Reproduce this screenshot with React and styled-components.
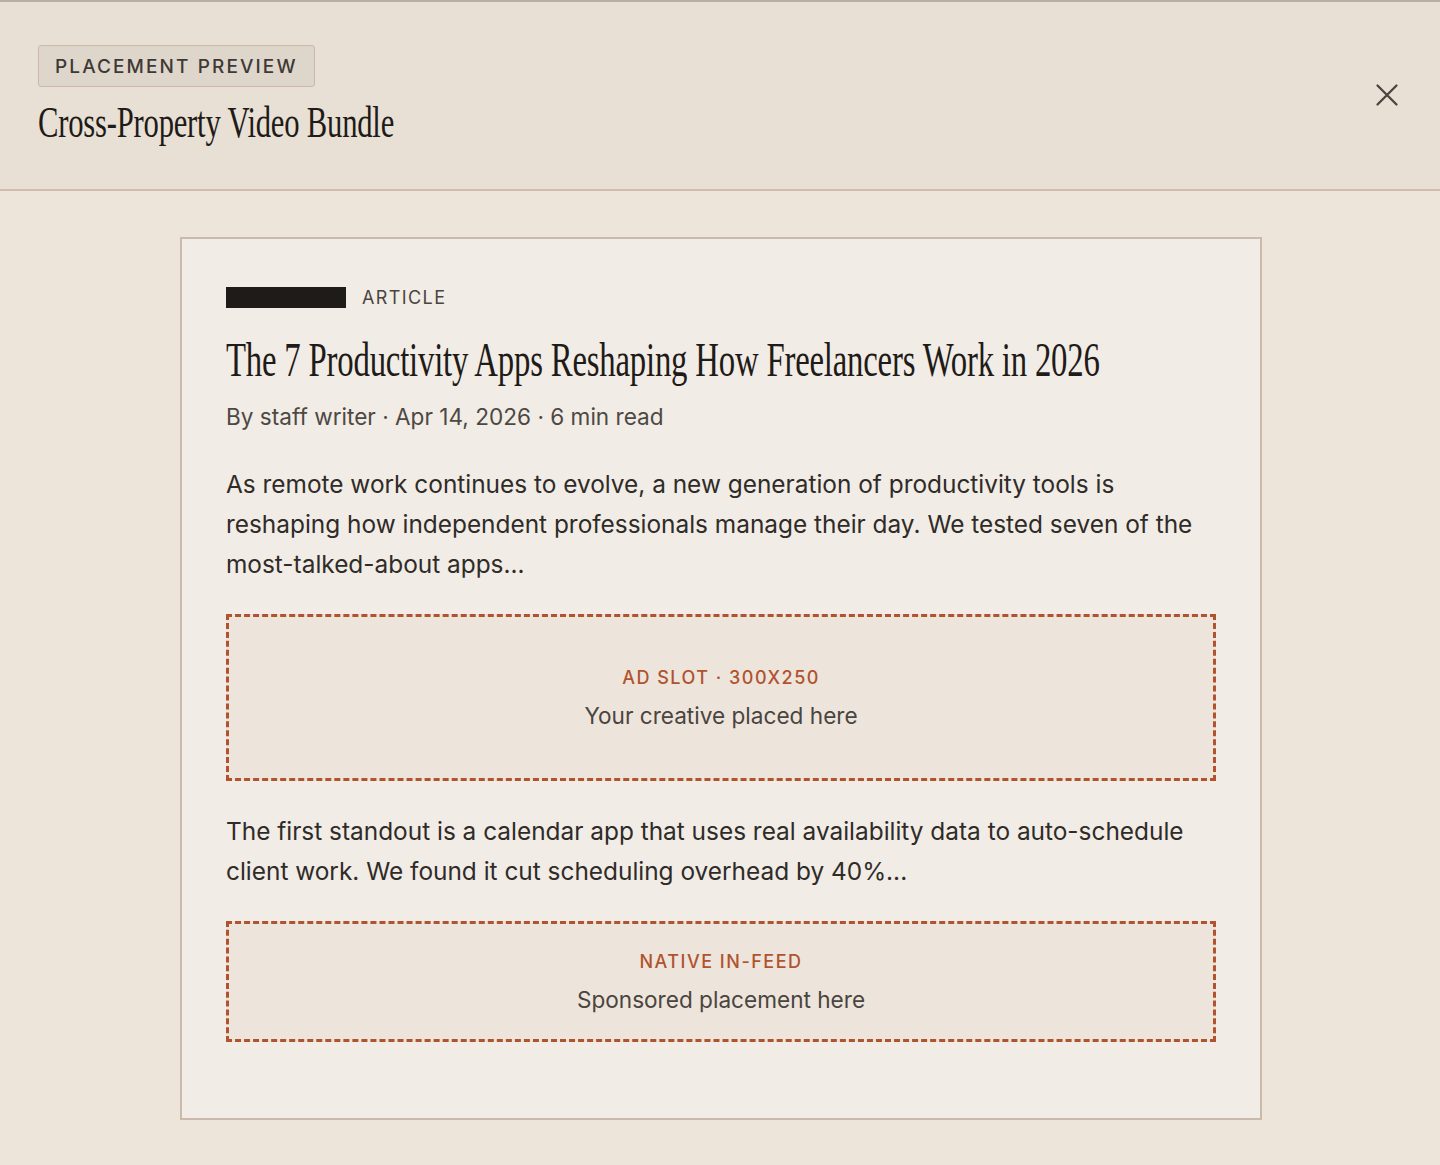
import React from "react";
import styled, { createGlobalStyle } from "styled-components";

const GlobalStyle = createGlobalStyle`
  html, body {
    margin: 0;
    padding: 0;
    background: #ede5da;
  }
  body {
    font-family: Inter, "Noto Sans", sans-serif;
    color: #2f2b28;
  }
`;

const Page = styled.div`
  min-height: 1165px;
  border-top: 2px solid #b8aea4;
  box-sizing: border-box;
  background: #ede5da;
`;

const Header = styled.header`
  display: flex;
  justify-content: space-between;
  align-items: flex-start;
  padding: 43px 38px 0 38px;
  height: 189px;
  box-sizing: border-box;
  background: #e8e0d4;
  border-bottom: 2px solid #cfbcad;
`;

const HeaderText = styled.div`
  display: flex;
  flex-direction: column;
  align-items: flex-start;
`;

const Badge = styled.span`
  display: inline-block;
  padding: 9px 16px 8px;
  font-size: 19px;
  font-weight: 500;
  letter-spacing: 2.1px;
  color: #3e3935;
  background: #ded6cb;
  border: 1.5px solid #cdb7a6;
  border-radius: 3px;
  line-height: 23px;
`;

const SerifLine = styled.h1`
  margin: 0;
  font-family: "Liberation Serif", "DejaVu Serif", serif;
  font-weight: 400;
  font-size: ${(p) => p.$size}px;
  line-height: ${(p) => p.$line}px;
  color: #1f1b18;
  white-space: nowrap;
  transform: scaleX(${(p) => p.$squeeze});
  transform-origin: left center;
  letter-spacing: -0.3px;
`;

const HeaderTitle = styled(SerifLine)`
  margin-top: 12px;
`;

const CloseButton = styled.button`
  margin-top: 36px;
  margin-right: 1px;
  width: 28px;
  height: 28px;
  padding: 0;
  border: none;
  background: transparent;
  color: #4a4440;
  cursor: pointer;
  display: flex;
  align-items: center;
  justify-content: center;
`;

const Body = styled.main`
  display: flex;
  justify-content: center;
  padding: 46px 0 45px 2px;
`;

const Card = styled.article`
  width: 1082px;
  box-sizing: border-box;
  background: #f1ece5;
  border: 2px solid #cbb9ab;
  padding: 48px 44px 76px 44px;
  display: flex;
  flex-direction: column;
`;

const Kicker = styled.div`
  display: flex;
  align-items: center;
  gap: 16px;
`;

const RedactedBar = styled.span`
  width: 120px;
  height: 21px;
  background: #1f1b18;
`;

const KickerLabel = styled.span`
  font-size: 18px;
  letter-spacing: 1.4px;
  color: #4a4440;
`;

const ArticleTitle = styled(SerifLine)`
  margin-top: 26px;
`;

const Meta = styled.div`
  margin-top: 16px;
  font-size: 22.6px;
  color: #4d4843;
  line-height: 30px;
`;

const Paragraph = styled.p`
  margin: ${(p) => p.$top}px 0 0;
  font-size: 24.4px;
  line-height: 40px;
  color: #2f2b28;
`;

const AdSlot = styled.div`
  margin-top: 30px;
  height: ${(p) => p.$height}px;
  box-sizing: border-box;
  border: 3px dashed #b0532e;
  background: #ede5db;
  display: flex;
  flex-direction: column;
  align-items: center;
  justify-content: center;
  gap: 13px;
`;

const SlotLabel = styled.span`
  font-size: 18px;
  font-weight: 500;
  letter-spacing: 1.5px;
  color: #b0532e;
  line-height: 24px;
`;

const SlotText = styled.span`
  font-size: 22.6px;
  color: #4a4440;
  line-height: 26px;
`;

export default function App() {
  return (
    <>
      <GlobalStyle />
      <Page>
        <Header>
          <HeaderText>
            <Badge>PLACEMENT PREVIEW</Badge>
            <HeaderTitle $size={44} $line={48} $squeeze={0.696}>
              Cross-Property Video Bundle
            </HeaderTitle>
          </HeaderText>
          <CloseButton aria-label="Close">
            <svg width="24" height="24" viewBox="0 0 24 24" fill="none" stroke="currentColor" strokeWidth="2.3" strokeLinecap="round">
              <path d="M2.5 2.5L21.5 21.5M21.5 2.5L2.5 21.5" />
            </svg>
          </CloseButton>
        </Header>
        <Body>
          <Card>
            <Kicker>
              <RedactedBar />
              <KickerLabel>ARTICLE</KickerLabel>
            </Kicker>
            <ArticleTitle $size={48} $line={52} $squeeze={0.683}>
              The 7 Productivity Apps Reshaping How Freelancers Work in 2026
            </ArticleTitle>
            <Meta>By staff writer · Apr 14, 2026 · 6 min read</Meta>
            <Paragraph $top={32}>
              As remote work continues to evolve, a new generation of productivity tools is
              reshaping how independent professionals manage their day. We tested seven of the
              most-talked-about apps...
            </Paragraph>
            <AdSlot $height={167}>
              <SlotLabel>AD SLOT · 300X250</SlotLabel>
              <SlotText>Your creative placed here</SlotText>
            </AdSlot>
            <Paragraph $top={30}>
              The first standout is a calendar app that uses real availability data to auto-schedule
              client work. We found it cut scheduling overhead by 40%...
            </Paragraph>
            <AdSlot $height={121}>
              <SlotLabel>NATIVE IN-FEED</SlotLabel>
              <SlotText>Sponsored placement here</SlotText>
            </AdSlot>
          </Card>
        </Body>
      </Page>
    </>
  );
}
